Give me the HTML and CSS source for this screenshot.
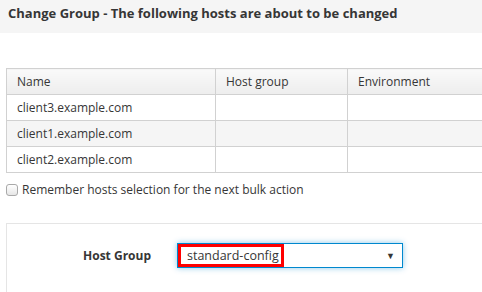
FILE: index.html
```html
<!DOCTYPE html>
<html lang="en">
<head>
    <meta charset="UTF-8">
    <title>Change Group</title>
    <link rel="stylesheet" href="styles.css">
</head>
<body>
    <div class="modal">
        <div class="modal-header">
            <h4>Change Group - The following hosts are about to be changed</h4>
        </div>
        <div class="modal-body">
            <table class="hosts">
                <thead>
                    <tr>
                        <th class="col-name">Name</th>
                        <th class="col-group">Host group</th>
                        <th>Environment</th>
                    </tr>
                </thead>
                <tbody>
                    <tr><td>client3.example.com</td><td></td><td></td></tr>
                    <tr><td>client1.example.com</td><td></td><td></td></tr>
                    <tr><td>client2.example.com</td><td></td><td></td></tr>
                </tbody>
            </table>

            <label class="remember">
                <span class="checkbox"></span>
                Remember hosts selection for the next bulk action
            </label>

            <div class="form-well">
                <div class="form-row">
                    <span class="form-label">Host Group</span>
                    <div class="select">
                        <span class="highlight">standard-config</span>
                        <span class="caret">&#9660;</span>
                    </div>
                </div>
            </div>
        </div>
    </div>
</body>
</html>
```

FILE: styles.css
```css
* {
    margin: 0;
    padding: 0;
    box-sizing: border-box;
}

body {
    font-family: "Open Sans", "Liberation Sans", Arial, sans-serif;
    font-size: 12px;
    color: #363636;
    background: #fff;
    overflow: hidden;
    height: 292px;
}

.modal {
    width: 640px;
}

.modal-header {
    background: #f5f5f5;
    height: 33px;
    padding: 4px 8px 0;
}

.modal-header h4 {
    font-size: 13px;
    font-weight: 700;
    line-height: 18px;
}

.modal-body {
    padding: 35px 0 0 6px;
}

.hosts {
    width: 620px;
    border-collapse: collapse;
}

.hosts th,
.hosts td {
    border: 1px solid #d1d1d1;
    height: 26px;
    padding: 0 10px;
    text-align: left;
    font-weight: 400;
    line-height: 18px;
}

.hosts th {
    background: linear-gradient(#fafafa, #ededed);
}

.col-name {
    width: 209px;
}

.col-group {
    width: 132px;
}

.hosts tbody tr:nth-child(even) td {
    background: #f5f5f5;
}

.remember {
    display: flex;
    align-items: center;
    gap: 4px;
    margin-top: 8px;
    line-height: 18px;
}

.checkbox {
    width: 12px;
    height: 12px;
    border: 1px solid #a9a9a9;
    border-radius: 3px;
    background: linear-gradient(#fff, #e6e6e6);
}

.form-well {
    margin-top: 24px;
    border: 1px solid #e5e5e5;
    height: 90px;
    padding-top: 19px;
}

.form-row {
    display: flex;
    align-items: center;
}

.form-label {
    width: 144px;
    text-align: right;
    font-weight: 700;
}

.select {
    margin-left: 26px;
    width: 226px;
    height: 25px;
    border: 1px solid #0088ce;
    box-shadow: 0 0 6px rgba(0, 136, 206, 0.45);
    display: flex;
    align-items: center;
    justify-content: space-between;
    padding-right: 7px;
}

.highlight {
    height: 23px;
    width: 106px;
    border: 3px solid #ff0000;
    padding-left: 6px;
    font-size: 12.5px;
    line-height: 17px;
    white-space: nowrap;
}

.caret {
    font-size: 9px;
    color: #363636;
}
```
